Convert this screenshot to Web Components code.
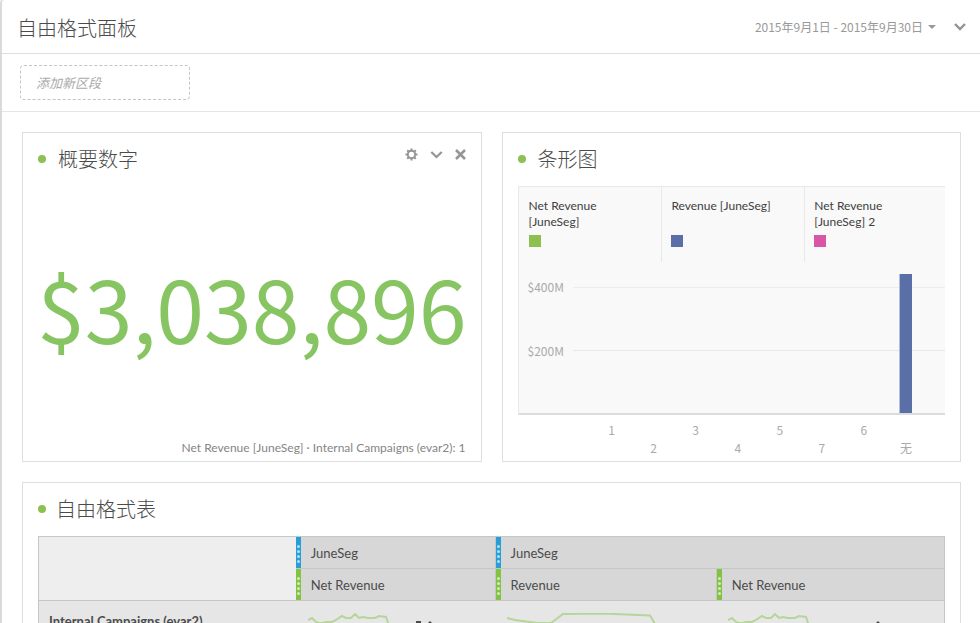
<!DOCTYPE html>
<html lang="zh-CN">
<head>
<meta charset="utf-8">
<meta name="viewport" content="width=device-width, initial-scale=1">
<title>自由格式面板</title>
<style>
  html, body { height: 100%; }
  body {
    margin: 0;
    overflow: hidden;
    background: #ececec;
    color: #4b4b4b;
    font: 13px/16px "Noto Sans CJK SC", "Noto Sans", sans-serif;
    --latin: Lato, "Noto Sans CJK SC", sans-serif;
    --line: #dedede;
    --green: #8cc152;
    --muted: #999;
  }
</style>
</head>
<body>
<analysis-panel heading="自由格式面板" dates="2015年9月1日 - 2015年9月30日">
  <panel-card heading="概要数字" controls>
    <summary-number caption="Net Revenue [JuneSeg] · Internal Campaigns (evar2): 1">$3,038,896</summary-number>
  </panel-card>
  <panel-card heading="条形图"><bar-chart></bar-chart></panel-card>
  <panel-card heading="自由格式表" wide><freeform-table></freeform-table></panel-card>
</analysis-panel>

<script>
class Base extends HTMLElement {
  render(html) {
    this.attachShadow({ mode: 'open' }).innerHTML = '<style>*{box-sizing:border-box}</style>' + html;
  }
}

class AnalysisPanel extends Base {
  connectedCallback() {
    this.render(`
    <style>
      :host { display: block; min-height: 100%; background: #fff; border-left: 2px solid #dadada; border-top-left-radius: 4px; }
      header { display: flex; align-items: center; justify-content: space-between; height: 54px; padding: 3px 14px 0 15px; border-bottom: 1px solid var(--line); }
      h1 { margin: 0; font-size: 20px; line-height: 28px; font-weight: 300; }
      .right { display: flex; align-items: center; gap: 18px; padding-bottom: 2px; }
      button { font: inherit; color: var(--muted); background: none; border: 0; padding: 0; display: flex; align-items: center; gap: 5px; }
      .date { font-size: 12px; }
      svg { display: block; }
      .segments { padding: 11px 18px; border-bottom: 1px solid #e6e6e6; height: 58px; }
      .zone { display: block; width: 170px; height: 35px; border: 1px dashed #c4c4c4; border-radius: 4px; }
      .drop { width: 100%; height: 100%; padding: 0 15px; border: 0; background: none; color: #999; font: italic 13px/16px "Noto Sans CJK SC", sans-serif; outline: none; }
      .drop::placeholder { color: #aaa; opacity: 1; }
      main { display: grid; grid-template-columns: 1fr 1fr; gap: 20px; padding: 20px 19px 20px 20px; }
    </style>
    <header>
      <h1></h1>
      <div class="right">
        <button class="date"><span></span>
          <svg width="8" height="4" viewBox="0 0 8 4"><path d="M0 0h8L4 4z" fill="#999"/></svg></button>
        <button aria-label="折叠"><svg width="12" height="8" viewBox="0 0 12 8"><path d="M1 1l5 5 5-5" fill="none" stroke="#8e9494" stroke-width="2.4"/></svg></button>
      </div>
    </header>
    <div class="segments"><label class="zone"><input class="drop" aria-label="添加新区段" placeholder="添加新区段"></label></div>
    <main><slot></slot></main>`);
    this.shadowRoot.querySelector('h1').textContent = this.getAttribute('heading');
    this.shadowRoot.querySelector('.date span').textContent = this.getAttribute('dates');
  }
}

class PanelCard extends Base {
  connectedCallback() {
    this.render(`
    <style>
      :host { display: flex; flex-direction: column; min-width: 0; min-height: 330px; border: 1px solid var(--line); box-sizing: border-box; padding: 0 15px; }
      :host([wide]) { grid-column: 1 / -1; }
      header { display: flex; align-items: center; height: 53px; padding-bottom: 2px; flex: none; }
      i { width: 8px; height: 8px; border-radius: 50%; background: var(--green); margin-right: 12px; }
      :host([wide]) i { margin-right: 10px; }
      h2 { margin: 0; font-size: 20px; line-height: 28px; font-weight: 300; flex: 1; }
      .tools { display: none; gap: 12px; padding-bottom: 8px; }
      :host([controls]) .tools { display: flex; }
      button { padding: 0; border: 0; background: none; color: #959595; }
      svg { display: block; fill: none; stroke: currentColor; }
    </style>
    <header><i></i><h2></h2>
      <div class="tools">
        <button aria-label="设置"><svg width="13" height="13" viewBox="0 0 13 13"><circle cx="6.5" cy="6.5" r="3.7" stroke-width="1.9"/><path d="M6.5 .5v2.2M6.5 10.3v2.2M.5 6.5h2.2M10.3 6.5h2.2M2.2 2.2l1.6 1.6M9.2 9.2l1.6 1.6M10.8 2.2L9.2 3.8M3.8 9.2l-1.6 1.6" stroke-width="2"/></svg></button>
        <button aria-label="折叠"><svg width="13" height="13" viewBox="0 0 13 13"><path d="M1.3 4l5.2 5 5.2-5" stroke-width="2.2"/></svg></button>
        <button aria-label="关闭"><svg width="11" height="13" viewBox="0 0 11 13"><path d="M1 2l9 9M10 2l-9 9" stroke-width="2.6"/></svg></button>
      </div>
    </header><slot></slot>`);
    this.shadowRoot.querySelector('h2').textContent = this.getAttribute('heading');
  }
}

class SummaryNumber extends Base {
  connectedCallback() {
    this.render(`
    <style>
      :host { display: flex; flex-direction: column; flex: 1; }
      .value { flex: 1; display: flex; align-items: center; justify-content: center; padding-bottom: 12px; color: #87c562; font-size: 86px; line-height: 100px; }
      .caption { font-family: var(--latin); font-size: 12px; color: #858585; text-align: right; padding-bottom: 5px; }
    </style>
    <div class="value"><slot></slot></div><div class="caption"></div>`);
    this.shadowRoot.querySelector('.caption').textContent = this.getAttribute('caption');
  }
}

class BarChart extends Base {
  connectedCallback() {
    const legend = [['Net Revenue [JuneSeg]', '#8cc152'], ['Revenue [JuneSeg]', '#5a6ea8'], ['Net Revenue [JuneSeg] 2', '#d955a5']];
    const ticks = ['1', '2', '3', '4', '5', '7', '6', '无'];
    this.render(`
    <style>
      :host { display: block; }
      .plot { background: #f9f9f9; border: 1px solid #e8e8e8; border-width: 1px 0 0 1px; }
      .legend { display: grid; grid-template-columns: 33.5% 33.5% 1fr; height: 75px; font-family: var(--latin); font-size: 12px; }
      .key { display: grid; grid-template-rows: 32px 12px; gap: 5px; padding: 11px 40px 0 9px; border-left: 1px solid #e8e8e8; color: #404040; }
      .key:first-child { border-left: 0; padding-left: 10px; }
      .key:nth-child(2) { padding-right: 10px; }
      .swatch { width: 12px; height: 12px; }
      .area { display: grid; grid-template-columns: 54px 1fr; height: 153px; border-bottom: 2px solid #dcdcdc; }
      .scale { display: grid; grid-template-rows: 16px 16px; row-gap: 48px; padding: 17px 0 0 9px; font-size: 12px; color: #aaa; }
      .bars, .axis { display: grid; grid-template-columns: repeat(8, 1fr); }
      .bars { align-items: end; padding: 0 18px;
        background: linear-gradient(#ececec, #ececec) 0 25px / 100% 1px no-repeat, linear-gradient(#e8e8e8, #e8e8e8) 0 88px / 100% 1px no-repeat; }
      .bar { grid-column: 8; justify-self: center; width: 13px; height: 139px; background: #5a6ea8; border-left: 1px solid #b4bdda; }
      .axis { padding: 7px 18px 0 73px; font-size: 12px; color: #aaa; text-align: center; }
      .axis span:nth-child(even) { padding-top: 18px; }
    </style>
    <div class="plot">
      <div class="legend">${legend.map(([t, c]) => `<div class="key"><span>${t}</span><div class="swatch" style="background:${c}"></div></div>`).join('')}</div>
      <div class="area"><div class="scale"><span>$400M</span><span>$200M</span></div><div class="bars"><div class="bar"></div></div></div>
    </div>
    <div class="axis">${ticks.map(t => `<span>${t}</span>`).join('')}</div>`);
  }
}

class FreeformTable extends Base {
  connectedCallback() {
    const spark = '<svg class="spark" width="84" height="20" viewBox="0 0 84 20"><path d="M0 7l4-2 4 4 3 1h4l3-1h6l4-2 6-4 4 2h5l4-4 4 4 4-1 5 1h7l4-2 7 1 3 9"/></svg>';
    const sparkWide = '<svg class="spark" width="150" height="20" viewBox="0 0 150 20"><path d="M0 5l8 2 22 3h14l12-9 40-.5 47 2 6 10"/></svg>';
    const grip = c => `<svg class="grip" width="5" height="31" viewBox="0 0 5 31"><path d="M0 0h5v31H0z" fill="${c}"/><g fill="#fff" fill-opacity=".65"><circle cx="2.5" cy="9.5" r="1.5"/><circle cx="2.5" cy="14.5" r="1.5"/><circle cx="2.5" cy="19.5" r="1.5"/><circle cx="2.5" cy="24.5" r="1.5"/></g></svg>`;
    const marks = '<svg class="marks" width="18" height="12" viewBox="0 0 18 12"><path d="M0 0h5v2H3v10H1V2H0zM14 0l3 3-1 1-2-2-2 2-1-1z"/></svg>';
    const caret = '<svg class="marks" width="6" height="12" viewBox="0 0 6 12"><path d="M3 0l3 3-1 1-2-2-2 2-1-1z"/></svg>';
    this.render(`
    <style>
      :host { display: block; }
      table { width: 100%; border-collapse: collapse; table-layout: fixed; border: 1px solid #c6c6c6; font-family: var(--latin); }
      th, td { padding: 0; border: 1px solid #c6c6c6; text-align: left; height: 32px; font-weight: 400; font-size: 13px; }
      thead th { background: #d7d7d7; border-left: 0; }
      thead td { background: #eee; border-right: 0; }
      tbody th, tbody td { background: #e6e6e6; height: 60px; vertical-align: top; border-width: 1px 0; }
      tbody th { font-weight: 700; padding: 12px 10px 0; }
      .head { display: flex; align-items: center; height: 31px; gap: 10px; }
      .grip { flex: none; }
      .cell { display: flex; align-items: flex-start; padding: 12px 0 0 12px; }
      .spark { fill: none; stroke: #b7d59a; stroke-width: 2; }
      .marks { fill: #4b4b4b; margin: 8px 0 0 24px; }
      .late .marks { margin-left: 63px; }
    </style>
    <table>
      <colgroup><col style="width:28.4%"><col style="width:22%"><col style="width:24.4%"><col></colgroup>
      <thead>
        <tr><td rowspan="2"></td>
          <th><div class="head">${grip('#269fd8')}JuneSeg</div></th>
          <th colspan="2"><div class="head">${grip('#269fd8')}JuneSeg</div></th></tr>
        <tr>${['Net Revenue', 'Revenue', 'Net Revenue'].map(t => `<th><div class="head">${grip('#82c341')}${t}</div></th>`).join('')}</tr>
      </thead>
      <tbody><tr><th scope="row">Internal Campaigns (evar2)</th>
        <td><div class="cell">${spark}${marks}</div></td>
        <td><div class="cell">${sparkWide}</div></td>
        <td><div class="cell late">${spark}${caret}</div></td></tr></tbody>
    </table>`);
  }
}
customElements.define('analysis-panel', AnalysisPanel);
customElements.define('panel-card', PanelCard);
customElements.define('summary-number', SummaryNumber);
customElements.define('bar-chart', BarChart);
customElements.define('freeform-table', FreeformTable);
</script>
</body>
</html>
